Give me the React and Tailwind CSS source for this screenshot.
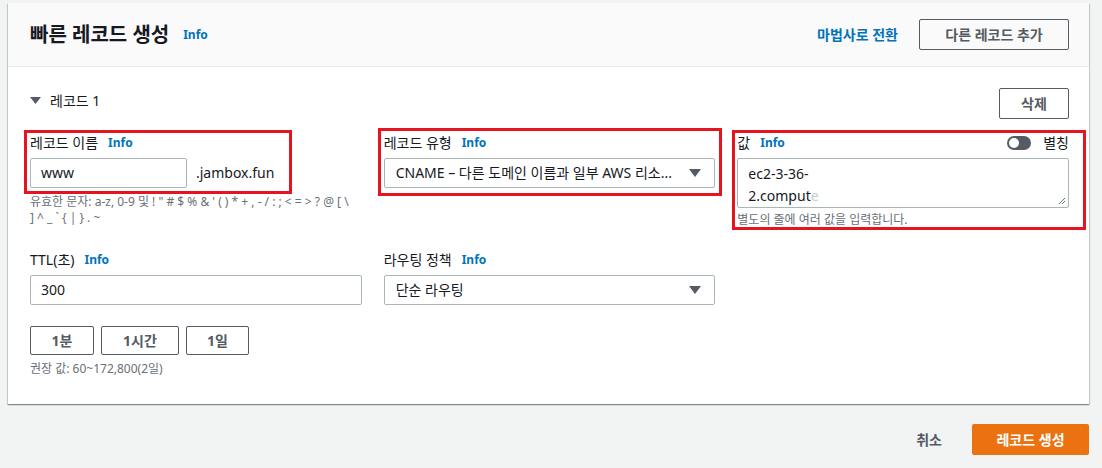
import React from 'react';

const font = { fontFamily: '"Noto Sans", "Noto Sans CJK KR", sans-serif' };

const Info = () => <span className="ml-[10px] text-[12px] font-bold text-[#0073bb]">Info</span>;

const Label = ({ children }) => (
  <div className="flex items-center h-[20px] text-[14px] font-normal text-[#16191f]">
    {children}
    <Info />
  </div>
);

const Arrow = () => (
  <svg width="14" height="10" viewBox="0 0 14 10" className="shrink-0">
    <path d="M1 1h12L7 9z" fill="#545b64" />
  </svg>
);

const Select = ({ value }) => (
  <div className="mt-[5px] h-[30px] flex items-center justify-between border border-[#aab7b8] rounded-[2px] pl-[11px] pr-[12px] text-[14px] text-[#16191f]">
    <span className="truncate">{value}</span>
    <Arrow />
  </div>
);

const SmallBtn = ({ children, w }) => (
  <button className={`h-[29px] ${w} border border-[#545b64] rounded-[2px] text-[14px] font-bold text-[#545b64]`}>{children}</button>
);

const RedBox = ({ className }) => (
  <div className={`absolute border-[3px] border-[#e5141f] pointer-events-none ${className}`} />
);

export default function App() {
  return (
    <div className="w-[1102px] h-[468px] bg-[#f2f3f3] pt-[3px] pl-[8px] leading-[1.4]" style={font}>
      <div className="relative w-[1081px] bg-white shadow-[0_1px_1px_0_rgba(0,28,36,0.3),1px_1px_1px_0_rgba(0,28,36,0.15),-1px_1px_1px_0_rgba(0,28,36,0.15)]">
        {/* header */}
        <div className="h-[64px] bg-[#fafafa] border-b border-[#eaeded] flex items-center justify-between pl-[22px] pr-[20px]">
          <div className="flex items-center">
            <h1 className="text-[20px] font-bold text-[#16191f]">빠른 레코드 생성</h1>
            <span className="ml-[14px] mt-[2px] text-[12px] font-bold text-[#0073bb]">Info</span>
          </div>
          <div className="flex items-center">
            <span className="text-[14px] font-bold text-[#0073bb] mr-[21px]">마법사로 전환</span>
            <button className="h-[31px] w-[150px] border border-[#545b64] rounded-[2px] text-[14px] font-bold text-[#545b64]">다른 레코드 추가</button>
          </div>
        </div>

        {/* body */}
        <div className="pl-[22px] pr-[20px] pt-[21px] pb-[27px]">
          <div className="flex items-center justify-between">
            <div className="flex items-center text-[14px] text-[#16191f] mt-[-6px]">
              <svg width="11" height="9" viewBox="0 0 11 9" className="mr-[9px]">
                <path d="M0 1h11L5.5 8z" fill="#545b64" />
              </svg>
              레코드 1
            </div>
            <button className="h-[31px] w-[70px] border border-[#545b64] rounded-[2px] text-[14px] font-bold text-[#545b64]">삭제</button>
          </div>

          <div className="grid grid-cols-3 gap-x-[22px] mt-[14px]">
            <div>
              <Label>레코드 이름</Label>
              <div className="mt-[5px] flex items-center">
                <div className="h-[30px] w-[157px] border border-[#aab7b8] rounded-[2px] pl-[10px] flex items-center text-[14px] text-[#16191f]">www</div>
                <span className="ml-[9px] text-[14px] text-[#16191f]">.jambox.fun</span>
              </div>
              <p className="mt-[6px] w-[323px] text-[12px] text-[#687078] leading-[16px]">
                유효한 문자: a-z, 0-9 및 ! " # $ % &amp; ' ( ) * + , - / : ; &lt; = &gt; ? @ [ \ ] ^ _ ` {'{'} | {'}'} . ~
              </p>
            </div>
            <div>
              <Label>레코드 유형</Label>
              <Select value="CNAME – 다른 도메인 이름과 일부 AWS 리소..." />
            </div>
            <div>
              <div className="flex items-center justify-between h-[20px]">
                <Label>값</Label>
                <div className="flex items-center">
                  <div className="w-[24px] h-[14px] rounded-full bg-[#545b64] flex items-center pl-[2px]">
                    <div className="w-[10px] h-[10px] rounded-full bg-white" />
                  </div>
                  <span className="ml-[12px] text-[14px] text-[#16191f]">별칭</span>
                </div>
              </div>
              <div className="relative mt-[5px] h-[50px] border border-[#aab7b8] rounded-[2px] pl-[10px] pt-[4px] text-[14px] text-[#16191f] leading-[22px]">
                <div>ec2-3-36-</div>
                <div>2.comput<span className="text-[#c9cdd0]">e</span></div>
                <svg width="8" height="8" viewBox="0 0 8 8" className="absolute right-[2px] bottom-[2px]">
                  <path d="M7 1L1 7M7 4L4 7" stroke="#687078" strokeWidth="1" />
                </svg>
              </div>
              <p className="mt-[4px] text-[12px] text-[#687078] leading-[16px]">별도의 줄에 여러 값을 입력합니다.</p>
            </div>
          </div>

          <div className="grid grid-cols-3 gap-x-[22px] mt-[22px]">
            <div>
              <Label>TTL(초)</Label>
              <div className="mt-[5px] h-[30px] border border-[#aab7b8] rounded-[2px] pl-[10px] flex items-center text-[14px] text-[#16191f]">300</div>
              <div className="mt-[21px] flex gap-[7px]">
                <SmallBtn w="w-[64px]">1분</SmallBtn>
                <SmallBtn w="w-[78px]">1시간</SmallBtn>
                <SmallBtn w="w-[63px]">1일</SmallBtn>
              </div>
              <p className="mt-[6px] text-[12px] text-[#687078] leading-[16px]">권장 값: 60~172,800(2일)</p>
            </div>
            <div>
              <Label>라우팅 정책</Label>
              <Select value="단순 라우팅" />
            </div>
          </div>
        </div>

        <RedBox className="left-[16px] top-[127px] w-[268px] h-[64px]" />
        <RedBox className="left-[370px] top-[125px] w-[344px] h-[68px]" />
        <RedBox className="left-[724px] top-[127px] w-[354px] h-[100px]" />
      </div>

      {/* footer */}
      <div className="w-[1081px] flex items-center justify-end mt-[20px]">
        <span className="text-[14px] font-bold text-[#545b64] mr-[30px]">취소</span>
        <button className="h-[31px] w-[117px] bg-[#ec7211] rounded-[2px] text-[14px] font-bold text-white">레코드 생성</button>
      </div>
    </div>
  );
}
